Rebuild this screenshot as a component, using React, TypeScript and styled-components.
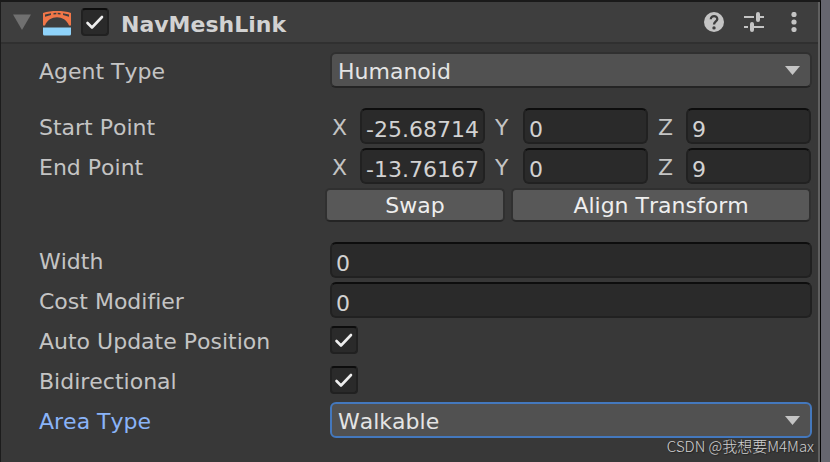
import React, { useId, useState } from "react";
import styled, { createGlobalStyle, css } from "styled-components";

const GlobalStyle = createGlobalStyle`
  * { box-sizing: border-box; }
  body {
    margin: 0;
    background: #66666f;
    color: #c4c4c4;
    font: 22px/26px "DejaVu Sans", Verdana, "Noto Sans CJK SC", sans-serif;
    font-kerning: none;
    font-variant-ligatures: none;
  }
  button, input, select { font: inherit; font-kerning: none; margin: 0; }
`;

const Editor = styled.main`
  position: relative;
  display: flex;
  min-height: 100vh;
  padding-right: 9px;
`;

const Inspector = styled.section`
  flex: 1;
  min-width: 0;
  background: #383838;
  border-top: 2px solid #1a1a1a;
  border-left: 1px solid #1c1c1c;
  border-right: 1px solid #060606;
  box-shadow: inset -2px 0 #606060;
`;

const Header = styled.header`
  display: flex;
  align-items: center;
  height: 42px;
  padding: 0 14px 0 12px;
  margin-right: 2px;
  background: #3e3e3e;
  border-bottom: 2px solid #303030;
`;

const IconButton = styled.button`
  display: flex;
  flex: none;
  padding: 0;
  border: 0;
  background: none;
  color: #c4c4c4;
`;

const ComponentIcon = styled.svg`
  flex: none;
  margin: 3px 10px 0 12px;
`;

const Title = styled.h2`
  flex: 1;
  margin: 0 0 0 12px;
  padding-top: 6px;
  color: #d2d2d2;
  font-size: 22px;
  font-weight: 700;
`;

const Actions = styled.div`
  display: flex;
  align-items: center;
  gap: 20px;
`;

const Body = styled.div`
  display: flex;
  flex-direction: column;
  gap: 20px;
  padding: 8px 8px 24px 38px;
`;

const Group = styled.div`
  display: flex;
  flex-direction: column;
  gap: 4px;
`;

const Row = styled.div`
  display: grid;
  grid-template-columns: 291px minmax(0, 1fr);
  align-items: center;
  min-height: 36px;
`;

const Label = styled.label<{ $active?: boolean }>`
  padding-top: 4px;
  color: ${(p) => (p.$active ? "#8ab4f8" : "#c4c4c4")};
`;

const GroupLabel = styled.span`
  padding-top: 4px;
`;

const sunken = css`
  background: #2a2a2a;
  border: 2px solid #212121;
  border-top-color: #0d0d0d;
  outline: none;
`;

const TextInput = styled.input`
  ${sunken}
  width: 100%;
  min-width: 0;
  height: 36px;
  padding: 6px 0 0 4px;
  border-radius: 6px;
  color: #d2d2d2;
`;

const Vector = styled.div`
  display: flex;
  gap: 10px;
  padding: 0 1px 0 2px;
`;

const Axis = styled.label`
  display: grid;
  flex: 1;
  grid-template-columns: 28px minmax(0, 1fr);
  align-items: center;
  min-width: 0;
`;

const AxisName = styled.span`
  padding-top: 4px;
`;

const SelectWrap = styled.div`
  display: grid;
  align-items: center;
  > * { grid-area: 1 / 1; }
`;

const Select = styled.select<{ $active?: boolean }>`
  appearance: none;
  width: 100%;
  height: 36px;
  padding: 4px 40px 0 6px;
  background: #515151;
  border: 2px solid ${(p) => (p.$active ? "#4478bd" : "#303030")};
  border-bottom-color: ${(p) => (p.$active ? "#4478bd" : "#242424")};
  border-radius: 6px;
  outline: none;
  color: #e4e4e4;
`;

const Arrow = styled.svg`
  justify-self: end;
  margin-right: 12px;
  pointer-events: none;
`;

const CheckWrap = styled.span`
  display: inline-grid;
  flex: none;
  width: 28px;
  height: 28px;
  > * { grid-area: 1 / 1; }
`;

const CheckInput = styled.input`
  ${sunken}
  appearance: none;
  width: 28px;
  height: 28px;
  border-radius: 4px;
  & + svg { pointer-events: none; visibility: hidden; }
  &:checked + svg { visibility: visible; }
`;

const ButtonRow = styled.div`
  display: grid;
  grid-template-columns: 3fr 5fr;
  gap: 6px;
  margin: 0 1px 0 286px;
`;

const Button = styled.button`
  height: 34px;
  padding: 2px 0 0;
  background: #585858;
  border: 2px solid #303030;
  border-bottom-color: #242424;
  border-radius: 5px;
  color: #eee;
  line-height: 28px;
`;

const Watermark = styled.span`
  position: absolute;
  right: 16px;
  bottom: 4px;
  color: #d0d0d0;
  font: 300 15px/24px "Noto Sans CJK SC", sans-serif;
  text-shadow: 1px 1px 1px #222;
  pointer-events: none;
`;

function Check({ id, label }: { id?: string; label?: string }) {
  const [on, setOn] = useState(true);
  return (
    <CheckWrap>
      <CheckInput type="checkbox" id={id} aria-label={label} checked={on} onChange={(e) => setOn(e.target.checked)} />
      <svg width="28" height="28" viewBox="0 0 28 28" fill="none" aria-hidden="true">
        <path d="M6.5 15 11 19.5 21 9" stroke="#eee" strokeWidth="2.6" strokeLinecap="round" strokeLinejoin="round" />
      </svg>
    </CheckWrap>
  );
}

function SelectRow({ label, options, active }: { label: string; options: string[]; active?: boolean }) {
  const id = useId();
  return (
    <Row>
      <Label htmlFor={id} $active={active}>{label}</Label>
      <SelectWrap>
        <Select id={id} $active={active} defaultValue={options[0]}>
          {options.map((o) => <option key={o}>{o}</option>)}
        </Select>
        <Arrow width="15" height="10" viewBox="0 0 15 10" aria-hidden="true">
          <path d="M0 1h15L7.5 10Z" fill="#c4c4c4" />
        </Arrow>
      </SelectWrap>
    </Row>
  );
}

function VectorRow({ label, values }: { label: string; values: string[] }) {
  return (
    <Row role="group" aria-label={label}>
      <GroupLabel>{label}</GroupLabel>
      <Vector>
        {["X", "Y", "Z"].map((axis, i) => (
          <Axis key={axis}>
            <AxisName>{axis}</AxisName>
            <TextInput defaultValue={values[i]} />
          </Axis>
        ))}
      </Vector>
    </Row>
  );
}

function NumberRow({ label, value }: { label: string; value: string }) {
  const id = useId();
  return (
    <Row>
      <Label htmlFor={id}>{label}</Label>
      <TextInput id={id} defaultValue={value} />
    </Row>
  );
}

function CheckRow({ label }: { label: string }) {
  const id = useId();
  return (
    <Row>
      <Label htmlFor={id}>{label}</Label>
      <Check id={id} />
    </Row>
  );
}

export default function App() {
  return (
    <>
      <GlobalStyle />
      <Editor>
        <Inspector>
          <Header>
            <IconButton aria-label="Collapse component">
              <svg width="18" height="16" viewBox="0 0 18 16"><path d="M0 .5h18L9 16Z" fill="#707070" /></svg>
            </IconButton>
            <ComponentIcon width="28" height="25" viewBox="0 0 28 25" aria-hidden="true">
              <path d="M0 2C8-.6 20-.6 28 2V14.500h-2C22 3.500 6 3.500 2 14.500H0Z" fill="#f07648" />
              <path d="M2 3.500 8 2.200V3.900L2 5.700ZM10.500 1.900 13.300 1.800V3.300L10.500 3.500ZM14.700 1.800 17.500 1.900V3.500L14.700 3.300ZM20 2.200 26 3.500V5.700L20 3.900Z" fill="#3e3e3e" />
              <path d="M0 16.500h28v6.500a1.500 1.500 0 0 1-1.500 1.500h-25A1.500 1.500 0 0 1 0 23Z" fill="#8fd3fa" />
            </ComponentIcon>
            <Check label="Enable NavMeshLink" />
            <Title>NavMeshLink</Title>
            <Actions>
              <IconButton aria-label="Help">
                <svg width="20" height="20" viewBox="0 0 20 20" fill="none">
                  <circle cx="10" cy="10" r="10" fill="currentColor" />
                  <path d="M6.800 7.200C6.800 3 13.400 3.200 13.300 7.100C13.200 9.500 10 9.500 10 12.600" stroke="#3e3e3e" strokeWidth="2.300" />
                  <circle cx="10" cy="15.900" r="1.700" fill="#3e3e3e" />
                </svg>
              </IconButton>
              <IconButton aria-label="Presets">
                <svg width="20" height="20" viewBox="0 0 20 20" fill="none" stroke="currentColor">
                  <path d="M0 5h10M14 5h6M0 15h4M8 15h12" strokeWidth="2" />
                  <path d="M14 2v6M8 12v6" strokeWidth="4" strokeLinecap="round" />
                </svg>
              </IconButton>
              <IconButton aria-label="More options">
                <svg width="20" height="20" viewBox="0 0 20 20" fill="currentColor">
                  <circle cx="10" cy="2.500" r="2.600" /><circle cx="10" cy="10" r="2.600" /><circle cx="10" cy="17.500" r="2.600" />
                </svg>
              </IconButton>
            </Actions>
          </Header>
          <Body>
            <SelectRow label="Agent Type" options={["Humanoid"]} />
            <Group>
              <VectorRow label="Start Point" values={["-25.68714", "0", "9"]} />
              <VectorRow label="End Point" values={["-13.76167", "0", "9"]} />
              <ButtonRow>
                <Button>Swap</Button>
                <Button>Align Transform</Button>
              </ButtonRow>
            </Group>
            <Group>
              <NumberRow label="Width" value="0" />
              <NumberRow label="Cost Modifier" value="0" />
              <CheckRow label="Auto Update Position" />
              <CheckRow label="Bidirectional" />
              <SelectRow label="Area Type" options={["Walkable", "Not Walkable", "Jump"]} active />
            </Group>
          </Body>
        </Inspector>
        <Watermark>CSDN @我想要M4Max</Watermark>
      </Editor>
    </>
  );
}
